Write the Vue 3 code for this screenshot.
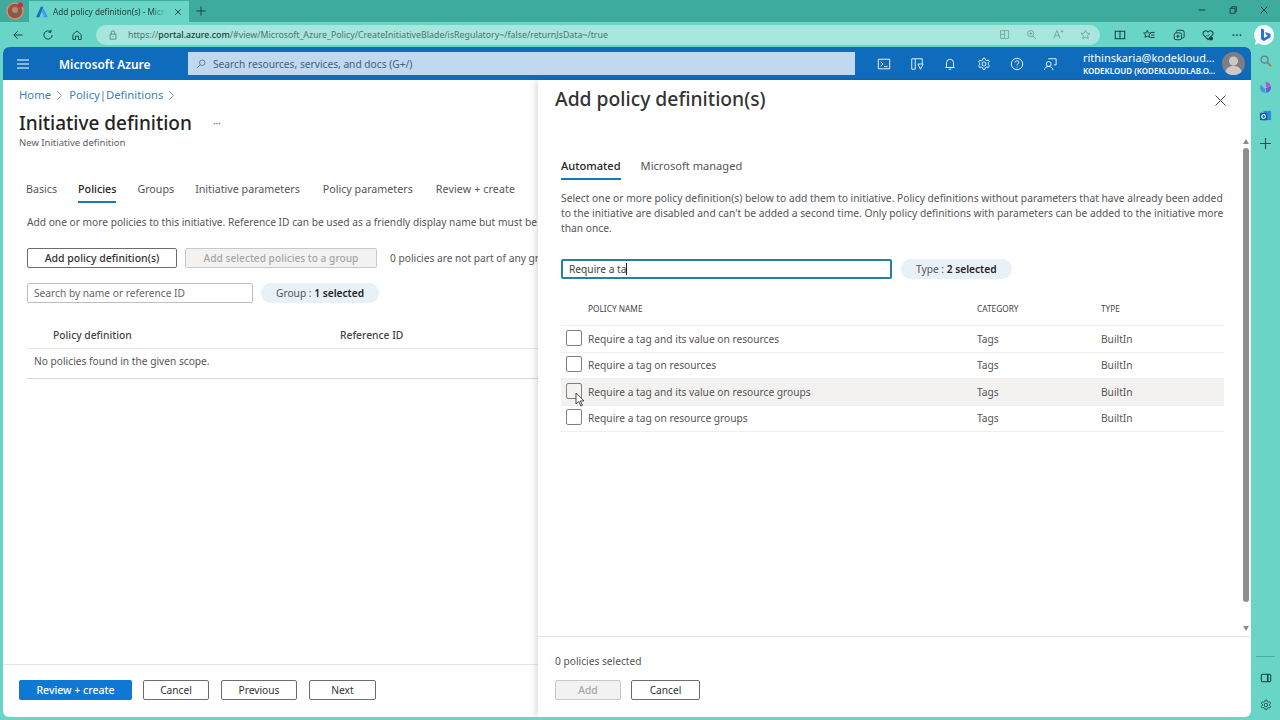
<script setup>
const tabs = ['Basics', 'Policies', 'Groups', 'Initiative parameters', 'Policy parameters', 'Review + create']
const rows = [
  'Require a tag and its value on resources',
  'Require a tag on resources',
  'Require a tag and its value on resource groups',
  'Require a tag on resource groups',
]
</script>

<template>
  <div class="screen">
    <!-- browser tab strip -->
    <div class="tabstrip">
      <div class="profile">
        <svg viewBox="0 0 18 18"><circle cx="9" cy="9" r="8" fill="#8a5a4c" stroke="#e08a6a" stroke-width="1.500"/><circle cx="9" cy="8" r="3" fill="#b98a72"/><circle cx="14.500" cy="3" r="2.500" fill="#e2203a"/></svg>
      </div>
      <div class="tab">
        <svg class="favicon" viewBox="0 0 16 16"><path d="M6.500 1h3.500L4.500 15H0z" fill="#1a6fc0"/><path d="M10 3l6 12H7l4-1.500L8 7.500z" fill="#3f9be8"/></svg>
        <span class="tab-title">Add policy definition(s) - Micros</span>
        <svg class="tab-close" viewBox="0 0 10 10"><path d="M1.500 1.500l7 7M8.500 1.500l-7 7" stroke="#26423e" stroke-width="1.200"/></svg>
      </div>
      <svg class="newtab" viewBox="0 0 12 12"><path d="M6 0.500v11M0.500 6h11" stroke="#17403a" stroke-width="1.100"/></svg>
      <div class="winbtns">
        <svg viewBox="0 0 12 12"><path d="M2 6h8" stroke="#17403a" stroke-width="1.200"/></svg>
        <svg viewBox="0 0 12 12"><path d="M2.500 4h6v6h-6zM4.500 4V2h5.500v6H8.500" fill="none" stroke="#17403a" stroke-width="1.100"/></svg>
        <svg viewBox="0 0 12 12"><path d="M2 2l8 8M10 2l-8 8" stroke="#17403a" stroke-width="1.200"/></svg>
      </div>
    </div>

    <!-- browser toolbar -->
    <div class="toolbar">
      <div class="nav-icons">
        <svg viewBox="0 0 16 16"><path d="M14 8H2.500M7.500 3l-5 5 5 5" fill="none" stroke="#17403a" stroke-width="1.300"/></svg>
        <svg viewBox="0 0 16 16"><path d="M13.500 8a5.500 5.500 0 1 1-1.700-4M12 1v3.300H8.700" fill="none" stroke="#17403a" stroke-width="1.300"/></svg>
        <svg viewBox="0 0 16 16"><path d="M2.500 7.500L8 2.500l5.500 5V14H10V9.500H6V14H2.500z" fill="none" stroke="#17403a" stroke-width="1.200"/></svg>
      </div>
      <div class="address">
        <svg class="lock" viewBox="0 0 12 12"><path d="M2.500 5h7v6h-7zM4 5V3a2 2 0 0 1 4 0v2M6 7.500v1" fill="none" stroke="#4d7f78"/></svg>
        <span class="url">https://<b>portal.azure.com</b>/#view/Microsoft_Azure_Policy/CreateInitiativeBlade/isRegulatory~/false/returnJsData~/true</span>
        <div class="addr-icons">
          <svg viewBox="0 0 14 14"><path d="M2 2h10v10H2zM7 2v10M2 7h5" fill="none" stroke="#6c9b95"/></svg>
          <svg viewBox="0 0 14 14"><circle cx="6" cy="6" r="4" fill="none" stroke="#6c9b95"/><path d="M9 9l4 4M4 6h4M6 4v4" stroke="#6c9b95"/></svg>
          <svg viewBox="0 0 14 14"><path d="M1 12L5 2l4 10M2.500 8.500h5M10 3h3M11.500 1.500v3" fill="none" stroke="#6c9b95"/></svg>
          <svg viewBox="0 0 14 14"><path d="M7 1.500l1.700 3.700 4 .4-3 2.700.9 4L7 10.300l-3.600 2 .9-4-3-2.700 4-.4z" fill="none" stroke="#6c9b95"/></svg>
        </div>
      </div>
      <div class="tool-icons">
        <svg viewBox="0 0 14 14"><path d="M1.500 2.500h11v9h-11zM7 2.500v9" fill="none" stroke="#17403a" stroke-width="1.200"/></svg>
        <svg viewBox="0 0 14 14"><path d="M5 1.500l1.300 3 3 .3-2.300 2 .7 3L5 8.300 2.300 9.800l.7-3-2.300-2 3-.3zM9 4h4.500M9.500 7h4M8.500 10h5" fill="none" stroke="#17403a" stroke-width="1.100"/></svg>
        <svg viewBox="0 0 14 14"><path d="M4 4V3a1.500 1.500 0 0 1 1.500-1.500h5A2.500 2.500 0 0 1 13 4v5a1.500 1.500 0 0 1-1.500 1.500H11" fill="none" stroke="#17403a" stroke-width="1.100"/><rect x="1.500" y="4.500" width="8.500" height="8" rx="2" fill="none" stroke="#17403a" stroke-width="1.100"/><path d="M5.700 6.500v4M3.700 8.500h4" stroke="#17403a" stroke-width="1.100"/></svg>
        <svg viewBox="0 0 14 14"><path d="M7 12.500L1.800 7A3 3 0 0 1 7 3.500 3 3 0 0 1 12.200 7z" fill="none" stroke="#17403a" stroke-width="1.200"/><path d="M5 7l1.500 1.500L9 6" fill="none" stroke="#17403a"/><circle cx="10.500" cy="11" r="2.300" fill="#17403a"/></svg>
        <span class="more">···</span>
      </div>
      <svg class="bing" viewBox="0 0 22 22">
        <path d="M11 1a10 10 0 1 1-5.500 18.300L2 21l.8-4.500A10 10 0 0 1 11 1z" fill="#f4fbff"/>
        <path d="M8 4.500l3 1v8.500l4-2.300-1.800-1-1.100-2.700 5.400 2v3.200L11 17l-3-1.800z" fill="#2a6fdb"/>
      </svg>
    </div>

    <div class="window">
      <div class="portal">
        <!-- Azure top bar -->
        <header class="topbar">
          <svg class="burger" viewBox="0 0 14 12"><path d="M1 2h12M1 6h12M1 10h12" stroke="#fff" stroke-width="1"/></svg>
          <div class="brand">Microsoft Azure</div>
          <div class="search">
            <svg viewBox="0 0 12 12"><circle cx="7.500" cy="4.500" r="3.300" fill="none" stroke="#4f6f96"/><path d="M5 7l-4 4" stroke="#4f6f96"/></svg>
            <span>Search resources, services, and docs (G+/)</span>
          </div>
          <div class="top-icons">
            <svg viewBox="0 0 16 16"><path d="M1.500 2.500h13v11h-13zM4 5.500l3 2.500-3 2.500M8 11h4" fill="none" stroke="#fff"/></svg>
            <svg viewBox="0 0 16 16"><path d="M2 2h4v12H2zM6 2h8v6M9 8h6l-3 6z" fill="none" stroke="#fff"/></svg>
            <svg viewBox="0 0 16 16"><path d="M4 12V6.500a4 4 0 0 1 8 0V12zM2.800 12h10.400M6.500 14h3" fill="none" stroke="#fff"/></svg>
            <svg viewBox="0 0 16 16"><circle cx="8" cy="8" r="2.300" fill="none" stroke="#fff"/><path d="M6.800 1.500h2.400l.4 1.900 1.600.8 1.800-.7 1.200 2.100-1.400 1.300v1.800l1.400 1.300-1.200 2.100-1.800-.7-1.600.8-.4 1.900H6.800l-.4-1.900-1.600-.8-1.800.7-1.200-2.100 1.400-1.300V7.100L1.800 5.800 3 3.700l1.800.7 1.600-.8z" fill="none" stroke="#fff"/></svg>
            <svg viewBox="0 0 16 16"><circle cx="8" cy="8" r="6.500" fill="none" stroke="#fff"/><path d="M6 6.300a2 2 0 1 1 3 1.700c-.7.400-1 .9-1 1.700M8 11.200v1" fill="none" stroke="#fff"/></svg>
            <svg viewBox="0 0 16 16"><circle cx="6.500" cy="8" r="2.800" fill="none" stroke="#fff"/><path d="M1.500 15c.5-3 2.500-4.200 5-4.200s4.500 1.200 5 4.200M6 2h9v7h-2.500" fill="none" stroke="#fff"/></svg>
          </div>
          <div class="account">
            <div class="acc-mail">rithinskaria@kodekloud...</div>
            <div class="acc-org">KODEKLOUD (KODEKLOUDLAB.O...</div>
          </div>
          <div class="avatar">
            <svg viewBox="0 0 24 24"><circle cx="12" cy="9.500" r="4.800" fill="#cfc6c6"/><path d="M3.500 21c1-5 4.500-6.500 8.500-6.500s7.500 1.500 8.500 6.500a11.500 11.500 0 0 1-17 0z" fill="#cfc6c6"/></svg>
          </div>
        </header>

        <div class="body">
          <!-- page behind the blade -->
          <main class="page">
            <div class="page-top">
              <nav class="crumbs">
                <a>Home</a>
                <svg class="chev" viewBox="0 0 5 9"><path d="M.5.500l4 4-4 4" fill="none" stroke="#777" stroke-width=".8"/></svg>
                <a>Policy | Definitions</a>
                <svg class="chev" viewBox="0 0 5 9"><path d="M.5.500l4 4-4 4" fill="none" stroke="#777" stroke-width=".8"/></svg>
              </nav>
              <div class="title-row">
                <h1>Initiative definition</h1>
                <span class="ellipsis">···</span>
              </div>
              <div class="subtitle">New Initiative definition</div>
              <div class="tabs">
                <span v-for="t in tabs" :key="t" class="tab-item" :class="{ active: t === 'Policies' }">{{ t }}</span>
              </div>
              <p class="intro">Add one or more policies to this initiative. Reference ID can be used as a friendly display name but must be unique.</p>
              <div class="actions">
                <button class="btn add-def">Add policy definition(s)</button>
                <button class="btn disabled add-group">Add selected policies to a group</button>
                <span class="note">0 policies are not part of any group</span>
              </div>
              <div class="filters">
                <div class="input ref-search">Search by name or reference ID</div>
                <div class="pill">Group : <b>1 selected</b></div>
              </div>
              <div class="ref-head">
                <span class="col-def">Policy definition</span>
                <span>Reference ID</span>
              </div>
              <div class="ref-empty">No policies found in the given scope.</div>
            </div>
            <footer class="page-foot">
              <button class="btn primary">Review + create</button>
              <button class="btn f-cancel">Cancel</button>
              <button class="btn f-prev">Previous</button>
              <button class="btn f-next">Next</button>
            </footer>
          </main>

          <!-- context blade -->
          <aside class="blade">
            <div class="blade-head">
              <h2>Add policy definition(s)</h2>
              <svg class="blade-close" viewBox="0 0 11 11"><path d="M.5.500l10 10M10.500.500l-10 10" stroke="#444" stroke-width="1"/></svg>
            </div>
            <div class="blade-scroll">
              <div class="blade-content">
                <div class="blade-tabs">
                  <span class="b-tab active">Automated</span>
                  <span class="b-tab">Microsoft managed</span>
                </div>
                <p class="blade-intro">Select one or more policy definition(s) below to add them to initiative. Policy definitions without parameters that have already been added to the initiative are disabled and can't be added a second time. Only policy definitions with parameters can be added to the initiative more than once.</p>
                <div class="blade-filter">
                  <div class="input focus">Require a ta<i class="caret"></i></div>
                  <div class="pill">Type : <b>2 selected</b></div>
                </div>
                <div class="grid-row grid-head">
                  <span></span><span>POLICY NAME</span><span>CATEGORY</span><span>TYPE</span>
                </div>
                <div v-for="(r, i) in rows" :key="r" class="grid-row item" :class="{ hover: i === 2 }">
                  <span class="check"></span>
                  <span>{{ r }}</span>
                  <span>Tags</span>
                  <span>BuiltIn</span>
                </div>
              </div>
              <div class="scrollbar">
                <span class="arrow up"></span>
                <span class="thumb"></span>
                <span class="arrow down"></span>
              </div>
            </div>
            <div class="blade-foot">
              <div class="selected-count">0 policies selected</div>
              <div class="foot-btns">
                <button class="btn disabled b-add">Add</button>
                <button class="btn b-cancel">Cancel</button>
              </div>
            </div>
            <svg class="cursor" viewBox="0 0 10 15"><path d="M1 1v11l2.800-2.500L5.800 14l1.600-.7-2-4.400H9z" fill="#fff" stroke="#333" stroke-width=".9"/></svg>
          </aside>
        </div>
      </div>

      <!-- edge sidebar -->
      <div class="sidebar">
        <div class="side-top">
          <svg viewBox="0 0 14 14"><circle cx="6" cy="6" r="3.800" fill="none" stroke="#5c7f96" stroke-width="1.400"/><path d="M9 9l4 4" stroke="#b0733f" stroke-width="1.800"/></svg>
          <svg viewBox="0 0 14 14"><path d="M7 1a6 6 0 0 1 5.500 3.500L8 7z" fill="#c04fc0"/><path d="M12.500 5A6 6 0 0 1 8 13L7 8z" fill="#5b5fd8"/><path d="M7 13A6 6 0 0 1 2 4l4 4z" fill="#4f8fe0"/></svg>
          <svg viewBox="0 0 14 14"><rect x="5" y="2" width="8" height="10" fill="#2d8fd0"/><rect x="1" y="4" width="8" height="8" rx="1" fill="#0f5ea8"/><circle cx="5" cy="8" r="2" fill="none" stroke="#fff" stroke-width="1.200"/></svg>
          <svg viewBox="0 0 12 12"><path d="M6 1v10M1 6h10" stroke="#27504a" stroke-width="1"/></svg>
        </div>
        <div class="side-bottom">
          <span class="side-rule"></span>
          <svg viewBox="0 0 14 14"><rect x="1.500" y="2.500" width="11" height="9" rx="1.500" fill="none" stroke="#17403a" stroke-width="1.200"/><path d="M9 2.500v9" stroke="#17403a" stroke-width="1.800"/></svg>
          <svg viewBox="0 0 16 16"><circle cx="8" cy="8" r="2.300" fill="none" stroke="#17403a"/><path d="M6.800 1.500h2.400l.4 1.900 1.600.8 1.800-.7 1.200 2.100-1.400 1.300v1.800l1.400 1.300-1.200 2.100-1.800-.7-1.600.8-.4 1.900H6.800l-.4-1.900-1.600-.8-1.800.7-1.200-2.100 1.400-1.300V7.100L1.800 5.800 3 3.700l1.800.7 1.600-.8z" fill="none" stroke="#17403a"/></svg>
        </div>
      </div>
    </div>
  </div>
</template>

<style>
html, body { margin: 0; overflow: hidden; }
</style>

<style scoped>
.screen {
  width: 1280px;
  height: 720px;
  display: flex;
  flex-direction: column;
  background: #68d5c7;
  font-family: "Noto Sans", "Liberation Sans", sans-serif;
  color: #323130;
  overflow: hidden;
}

/* browser chrome */
.tabstrip {
  height: 22px;
  display: flex;
  align-items: stretch;
  background: #3dab9d;
  padding-left: 6px;
}
.profile { width: 18px; height: 18px; margin-top: 2px; }
.profile svg { display: block; width: 18px; height: 18px; }
.tab {
  width: 160px;
  margin-left: 5px;
  margin-top: 1px;
  background: #68d5c7;
  display: flex;
  align-items: center;
  padding-left: 7px;
  box-sizing: border-box;
}
.favicon { width: 12px; height: 12px; flex: none; }
.tab-title {
  margin-left: 5px;
  font-size: 8.200px;
  color: #1f3d39;
  width: 113px;
  overflow: hidden;
  white-space: nowrap;
  -webkit-mask-image: linear-gradient(to right, #000 88%, transparent);
  mask-image: linear-gradient(to right, #000 88%, transparent);
}
.tab-close { width: 8px; height: 8px; margin-left: 8px; flex: none; }
.newtab { width: 10px; height: 10px; margin: 6px 0 0 7px; }
.winbtns {
  margin-left: auto;
  display: flex;
  gap: 21px;
  padding: 5px 11px 0 0;
}
.winbtns svg { width: 10px; height: 10px; }

.toolbar {
  height: 25px;
  display: flex;
  align-items: center;
  padding-left: 12px;
}
.nav-icons { display: flex; gap: 17.500px; }
.nav-icons svg { width: 12px; height: 12px; }
.address {
  width: 1004px;
  height: 20px;
  margin-left: 13px;
  border-radius: 10px;
  background: #a6e6dd;
  display: flex;
  align-items: center;
  padding-left: 12px;
  box-sizing: border-box;
}
.lock { width: 10px; height: 10px; flex: none; }
.url {
  margin-left: 10px;
  font-size: 8.800px;
  color: #4f7470;
  white-space: nowrap;
}
.url b { color: #17403a; font-weight: 500; }
.addr-icons {
  margin-left: auto;
  display: flex;
  gap: 15.700px;
  padding-right: 9.500px;
}
.addr-icons svg { width: 11px; height: 11px; }
.tool-icons {
  margin-left: 14px;
  display: flex;
  align-items: center;
  gap: 17.300px;
}
.tool-icons svg { width: 12px; height: 12px; }
.more { width: 12px; font-size: 10px; line-height: 12px; color: #17403a; font-weight: 700; letter-spacing: .6px; text-align: center; white-space: nowrap; }
.bing { width: 22px; height: 22px; margin-left: 10px; flex: none; }

.window {
  flex: 1;
  display: flex;
  min-height: 0;
}
.portal {
  width: 1248px;
  margin-left: 3px;
  margin-bottom: 3px;
  border-radius: 6px;
  overflow: hidden;
  background: #fff;
  display: flex;
  flex-direction: column;
}

/* azure header */
.topbar {
  height: 33px;
  flex: none;
  background: #0f6cbd;
  display: flex;
  align-items: center;
  color: #fff;
}
.burger { width: 14px; height: 12px; margin-left: 13px; }
.brand {
  margin-left: 29px;
  width: 129px;
  font-size: 11.900px;
  font-weight: 600;
  white-space: nowrap;
}
.search {
  width: 667px;
  height: 23px;
  background: #c0d8f0;
  display: flex;
  align-items: center;
  padding-left: 8px;
  box-sizing: border-box;
  color: #44607f;
  font-size: 10.200px;
}
.search svg { width: 10px; height: 10px; margin-right: 7px; }
.top-icons {
  margin-left: 22px;
  display: flex;
  gap: 19.200px;
}
.top-icons svg { width: 14px; height: 14px; }
.account {
  margin-left: 26px;
  width: 139px;
  white-space: nowrap;
  overflow: hidden;
}
.acc-mail { font-size: 11px; line-height: 14px; }
.acc-org { font-size: 8px; line-height: 12px; font-weight: 600; }
.avatar {
  width: 23px;
  height: 23px;
  border-radius: 50%;
  background: #7d7d82;
  overflow: hidden;
}
.avatar svg { width: 23px; height: 23px; display: block; }

.body {
  flex: 1;
  display: flex;
  min-height: 0;
}
.page {
  width: 535px;
  flex: none;
  display: flex;
  flex-direction: column;
  overflow: hidden;
}
.page-top {
  flex: 1;
  padding: 7px 0 0 16px;
  white-space: nowrap;
}
.crumbs {
  display: flex;
  align-items: center;
  font-size: 11.300px;
  word-spacing: -3px;
  line-height: 16px;
  color: #3d7fb5;
}
.chev { width: 5px; height: 9px; margin: 0 7px 0 6px; }
.title-row {
  display: flex;
  align-items: center;
  margin-top: 7px;
}
h1 {
  margin: 0;
  font-size: 19px;
  font-weight: 500;
  line-height: 26px;
  color: #252423;
}
.ellipsis { margin-left: 21px; font-size: 10px; color: #666; }
.subtitle { font-size: 9.500px; line-height: 14px; color: #5e5e5e; }
.tabs {
  display: flex;
  margin: 31px 0 0 7px;
  gap: 21px;
  font-size: 10.700px;
  line-height: 16px;
  color: #555;
}
.tab-item { padding-bottom: 4px; }
.tab-item:nth-child(5) { margin-left: 2px; }
.tab-item:nth-child(6) { margin-left: 2px; letter-spacing: .1px; }
.tab-item.active {
  color: #252423;
  font-weight: 500;
  border-bottom: 2px solid #1a78b8;
}
.intro {
  margin: 12px 0 0 8px;
  font-size: 10.200px;
  line-height: 14px;
  color: #555;
}
.actions {
  display: flex;
  align-items: center;
  margin: 19px 0 0 8px;
}
.btn {
  flex: none;
  height: 20px;
  padding: 0;
  border: 1px solid #6d6d6d;
  border-radius: 2px;
  background: #fff;
  color: #323130;
  font-family: inherit;
  font-size: 10.200px;
  box-sizing: border-box;
}
.btn.disabled { border-color: #c8c8c8; background: #f3f2f1; color: #a6a6a6; font-weight: 500; }
.btn.primary { width: 113px; border: none; background: #0f78d4; color: #fff; font-weight: 500; font-size: 10.500px; }
.add-def { width: 150px; font-weight: 500; font-size: 10.500px; }
.add-group { width: 192px; margin-left: 8px; }
.note { margin-left: 13px; font-size: 10.200px; color: #555; }
.filters {
  display: flex;
  align-items: center;
  margin: 15px 0 0 8px;
}
.input {
  height: 20px;
  box-sizing: border-box;
  border: 1px solid #bdbdbd;
  border-radius: 2px;
  font-size: 10.200px;
  line-height: 18px;
  padding-left: 6px;
  color: #666;
}
.ref-search { width: 226px; }
.pill {
  height: 20px;
  border-radius: 10px;
  background: #e8f0f8;
  font-size: 10.200px;
  line-height: 20px;
  padding: 0 15px;
  color: #555;
  margin-left: 8px;
}
.pill b { color: #252423; font-weight: 600; }
.ref-head {
  display: flex;
  margin: 24px 0 0 8px;
  padding-bottom: 5px;
  border-bottom: 1px solid #e8e8e8;
  font-size: 10.300px;
  line-height: 16px;
  font-weight: 500;
  color: #444;
}
.col-def { width: 287px; margin-left: 26px; }
.ref-empty {
  margin-left: 8px;
  padding: 4.500px 7px 9.500px;
  font-size: 10.200px;
  line-height: 15px;
  border-bottom: 1px solid #d8d8d8;
  color: #555;
}
.page-foot {
  height: 53px;
  flex: none;
  margin-right: -3px;
  border-top: 1px solid #e4e4e4;
  display: flex;
  align-items: center;
  padding: 0 0 2px 16px;
  box-sizing: border-box;
}
.f-cancel { width: 66px; margin-left: 11px; }
.f-prev { width: 76px; margin-left: 12px; }
.f-next { width: 67px; margin-left: 12px; }

/* blade */
.blade {
  flex: 1;
  display: flex;
  flex-direction: column;
  position: relative;
  box-shadow: -3px 0 6px rgba(0, 0, 0, .12);
  min-width: 0;
}
.blade-head {
  height: 54px;
  flex: none;
  display: flex;
  align-items: flex-start;
  justify-content: space-between;
  padding: 4px 25px 0 17px;
}
h2 {
  margin: 0;
  font-size: 19.300px;
  font-weight: 500;
  line-height: 30px;
  color: #333;
}
.blade-close { width: 11px; height: 11px; margin-top: 11px; }
.blade-scroll {
  flex: 1;
  display: flex;
  min-height: 0;
}
.blade-content {
  flex: 1;
  padding: 20px 0 0 23px;
  min-width: 0;
}
.blade-tabs {
  display: flex;
  gap: 20px;
  font-size: 11.100px;
  line-height: 16px;
  color: #555;
}
.b-tab { padding-bottom: 4px; }
.b-tab.active { color: #252423; font-weight: 500; border-bottom: 2px solid #1a78b8; }
.blade-intro {
  margin: 10.500px 0 0;
  width: 666px;
  font-size: 10.250px;
  line-height: 15px;
  color: #555;
}
.blade-filter {
  display: flex;
  align-items: center;
  margin-top: 23.500px;
}
.blade-filter .pill { margin-left: 9px; }
.input.focus {
  width: 331px;
  border: 2px solid #2a7f9e;
  color: #444;
  line-height: 16px;
  padding-left: 6px;
}
.caret {
  display: inline-block;
  width: 1px;
  height: 12px;
  background: #222;
  vertical-align: -2px;
}
.grid-row {
  width: 663px;
  display: grid;
  grid-template-columns: 27px 389px 124px 123px;
  align-items: center;
  font-size: 10.200px;
  color: #555;
  border-bottom: 1px solid #efefef;
}
.grid-head {
  height: 35px;
  margin-top: 12px;
  font-size: 8.300px;
  color: #444;
  box-sizing: border-box;
}
.item { height: 26.500px; box-sizing: border-box; }
.item.hover { background: #f3f2f1; }
.check {
  width: 16px;
  height: 16px;
  margin: -2px 0 0 5px;
  border: 1px solid #808080;
  border-radius: 2px;
  box-sizing: border-box;
}
.scrollbar {
  width: 11px;
  flex: none;
  display: flex;
  flex-direction: column;
  align-items: center;
  padding-top: 1px;
  gap: 4px;
}
.thumb {
  width: 6px;
  height: 454px;
  border-radius: 3px;
  background: #8d8d8d;
}
.arrow { width: 0; height: 0; border-left: 3.500px solid transparent; border-right: 3.500px solid transparent; }
.arrow.up { border-bottom: 5px solid #8d8d8d; }
.arrow.down { border-top: 5px solid #8d8d8d; margin-top: auto; margin-bottom: 5.500px; }
.blade-foot {
  height: 81px;
  flex: none;
  border-top: 1px solid #e4e4e4;
  padding: 16.500px 0 0 17px;
  box-sizing: border-box;
}
.selected-count { font-size: 10.200px; line-height: 15px; color: #555; }
.foot-btns { display: flex; gap: 10px; margin-top: 11px; }
.b-add { width: 66px; }
.b-cancel { width: 69px; }
.cursor {
  position: absolute;
  left: 37px;
  top: 312px;
  width: 10px;
  height: 15px;
}

/* edge sidebar */
.sidebar {
  flex: 1;
  display: flex;
  flex-direction: column;
  justify-content: space-between;
  align-items: center;
  padding-bottom: 9px;
}
.side-top {
  display: flex;
  flex-direction: column;
  align-items: center;
  gap: 14.700px;
  padding-top: 6.500px;
}
.side-top svg { width: 13px; height: 13px; }
.side-bottom {
  display: flex;
  flex-direction: column;
  align-items: center;
  gap: 15px;
}
.side-bottom svg { width: 12px; height: 12px; }
.side-rule { width: 19px; height: 1px; background: #4fa99c; }
</style>
